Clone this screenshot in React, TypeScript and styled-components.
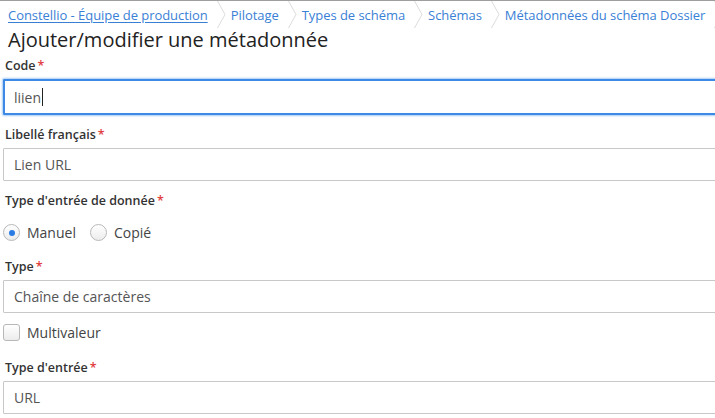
import styled, { createGlobalStyle } from "styled-components";

const GlobalStyle = createGlobalStyle`
  html, body {
    margin: 0;
    padding: 0;
    background: #ffffff;
    overflow: hidden;
  }

  body {
    font-family: "Open Sans", "Liberation Sans", sans-serif;
    color: #333333;
  }
`;

const Page = styled.div`
  width: 715px;
  border-top: 1px solid #9e9e9e;
`;

const Breadcrumbs = styled.nav`
  display: flex;
  align-items: stretch;
  height: 27px;
  padding-left: 8px;
  white-space: nowrap;
`;

const CrumbItem = styled.span`
  display: flex;
  flex: none;
`;

const Crumb = styled.a<{ $first?: boolean }>`
  display: flex;
  align-items: center;
  font-size: 13px;
  letter-spacing: -0.05px;
  color: #3a7fd6;
  text-decoration: ${(p) => (p.$first ? "underline" : "none")};
  text-underline-offset: 2px;
  padding-right: 9px;
`;

const Chevron = styled.svg`
  width: 9px;
  height: 27px;
  flex: none;
  margin-right: 5px;
`;

const Title = styled.h1`
  margin: 0;
  padding: 0 0 0 8px;
  height: 26px;
  line-height: 24px;
  font-size: 20px;
  font-weight: 400;
  color: #222222;
`;

const Form = styled.form`
  display: flex;
  flex-direction: column;
  padding-left: 3px;
`;

const Field = styled.div<{ $gap: number }>`
  display: flex;
  flex-direction: column;
  margin-top: ${(p) => p.$gap}px;
`;

const Label = styled.label`
  font-size: 12.5px;
  font-weight: 600;
  color: #333333;
  line-height: 17px;
  padding-left: 2px;
  margin-bottom: 5px;
`;

const Required = styled.span`
  color: #e0413f;
  margin-left: 2px;
`;

const TextInput = styled.div<{ $focused?: boolean }>`
  box-sizing: border-box;
  width: 740px;
  height: ${(p) => (p.$focused ? 36 : 33)}px;
  display: flex;
  align-items: center;
  padding-left: ${(p) => (p.$focused ? 9 : 10)}px;
  font-size: 14px;
  color: #555555;
  border: ${(p) => (p.$focused ? "2px solid #3d8ae6" : "1px solid #c8c8c8")};
  box-shadow: ${(p) => (p.$focused ? "0 0 2px 1px #a9cdf5" : "none")};
  border-radius: 1px;
`;

const Caret = styled.span`
  display: inline-block;
  width: 1px;
  height: 18px;
  background: #222222;
  margin-left: 1px;
`;

const OptionRow = styled.div<{ $top?: number }>`
  display: flex;
  align-items: center;
  gap: 14px;
  height: 17px;
  margin-top: ${(p) => p.$top ?? 0}px;
`;

const Option = styled.span`
  display: flex;
  align-items: center;
  gap: 7px;
  height: 17px;
  font-size: 14px;
  color: #444444;
`;

const Radio = styled.span<{ $checked?: boolean }>`
  box-sizing: border-box;
  width: 17px;
  height: 17px;
  border-radius: 50%;
  border: 1px solid #b8b8b8;
  background: linear-gradient(#ffffff, #ececec);
  display: flex;
  align-items: center;
  justify-content: center;

  &::after {
    content: "";
    width: 6px;
    height: 6px;
    border-radius: 50%;
    background: ${(p) => (p.$checked ? "#2a7be4" : "transparent")};
  }
`;

const Checkbox = styled.span`
  box-sizing: border-box;
  width: 17px;
  height: 17px;
  border-radius: 3px;
  border: 1px solid #b8b8b8;
  background: linear-gradient(#ffffff, #ececec);
`;

const Breadcrumb = ({ items }: { items: string[] }) => (
  <Breadcrumbs>
    {items.map((item, i) => (
      <CrumbItem key={item}>
        <Crumb $first={i === 0} href="#">
          {item}
        </Crumb>
        <Chevron viewBox="0 0 9 27">
          <polyline
            points="0.5,0 8,13.5 0.5,27"
            fill="none"
            stroke="#dcdcdc"
            strokeWidth="1"
          />
        </Chevron>
      </CrumbItem>
    ))}
  </Breadcrumbs>
);

const App = () => {
  return (
    <Page>
      <GlobalStyle />
      <Breadcrumb
        items={[
          "Constellio - Équipe de production",
          "Pilotage",
          "Types de schéma",
          "Schémas",
          "Métadonnées du schéma Dossier",
        ]}
      />
      <Title>Ajouter/modifier une métadonnée</Title>
      <Form>
        <Field $gap={3}>
          <Label>
            Code<Required>*</Required>
          </Label>
          <TextInput $focused>
            liien
            <Caret />
          </TextInput>
        </Field>
        <Field $gap={11}>
          <Label>
            Libellé français<Required>*</Required>
          </Label>
          <TextInput>Lien URL</TextInput>
        </Field>
        <Field $gap={11}>
          <Label>
            Type d'entrée de donnée<Required>*</Required>
          </Label>
          <OptionRow $top={10}>
            <Option>
              <Radio $checked />
              Manuel
            </Option>
            <Option>
              <Radio />
              Copié
            </Option>
          </OptionRow>
        </Field>
        <Field $gap={17}>
          <Label>
            Type<Required>*</Required>
          </Label>
          <TextInput>Chaîne de caractères</TextInput>
        </Field>
        <Field $gap={11}>
          <Option>
            <Checkbox />
            Multivaleur
          </Option>
        </Field>
        <Field $gap={18}>
          <Label>
            Type d'entrée<Required>*</Required>
          </Label>
          <TextInput>URL</TextInput>
        </Field>
      </Form>
    </Page>
  );
};

export default App;
